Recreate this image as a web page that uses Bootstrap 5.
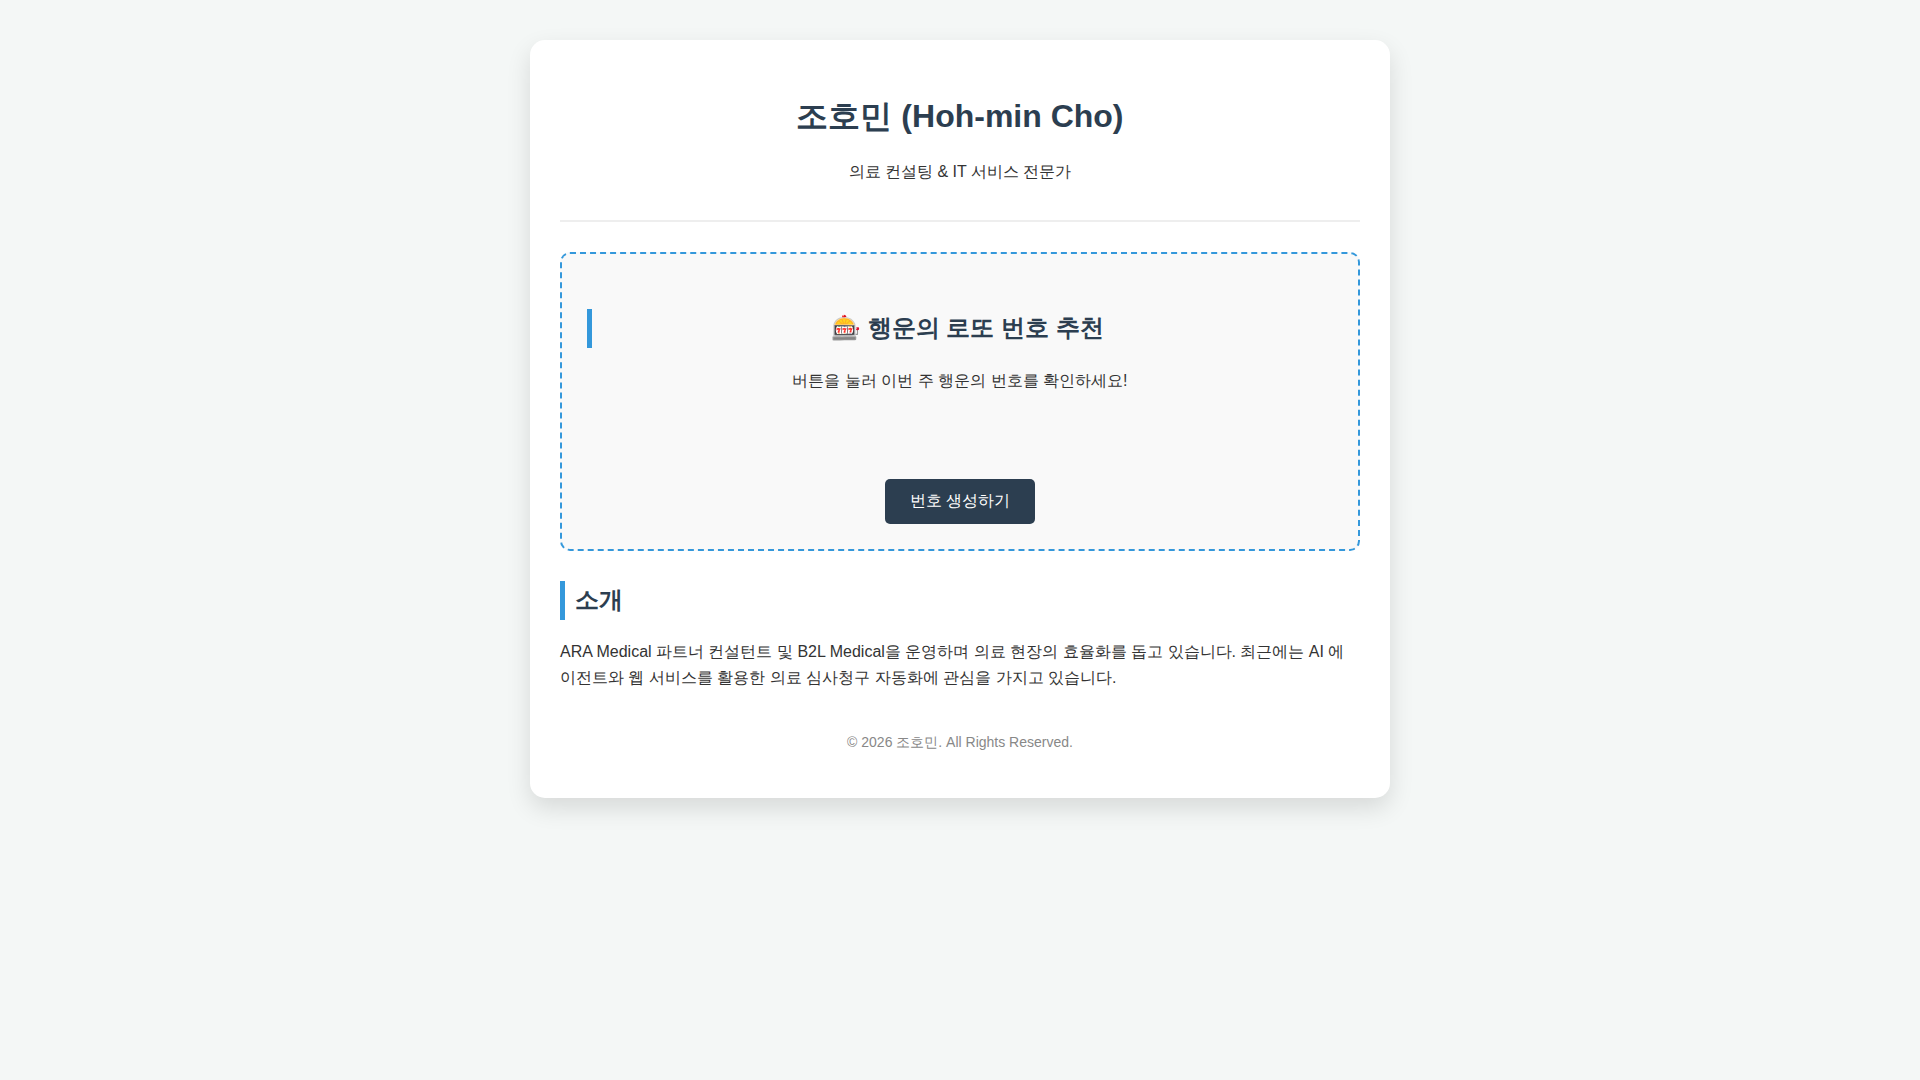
<!DOCTYPE html>
<html lang="ko">
<head>
<meta charset="utf-8">
<meta name="viewport" content="width=device-width, initial-scale=1">
<title>조호민 (Hoh-min Cho)</title>
<link href="https://cdn.jsdelivr.net/npm/bootstrap@5.3.0/dist/css/bootstrap.min.css" rel="stylesheet">
<style>
  body { background: #f4f7f6; color: #333; font-family: "Liberation Sans", sans-serif; font-size: 16px; line-height: 26px; }
  .profile { max-width: 860px; margin: 40px auto; padding: 30px; border-radius: 15px; box-shadow: 0 10px 25px rgba(0, 0, 0, .12); }
  .profile-head { padding: 21px 0 35px; margin-bottom: 30px; border-bottom: 2px solid #eee; }
  h1, h2 { color: #2c3e50; font-weight: 700; }
  h1 { font-size: 32px; line-height: 51px; margin-bottom: 17px; }
  h2 { min-height: 39px; font-size: 24px; line-height: 38px; margin: 30px 0 19px; padding-left: 10px; border-left: 5px solid #3498db; }
  .lotto { padding: 25px; background: #f9f9f9; border: 2px dashed #3498db; border-radius: 10px; }
  .lotto h2 { margin-bottom: 20px; }
  .lotto-numbers { min-height: 45px; margin: 20px 0; }
  .btn-draw { --bs-btn-bg: #2c3e50; --bs-btn-color: #fff; --bs-btn-hover-bg: #3498db; --bs-btn-hover-color: #fff; --bs-btn-active-bg: #3498db; --bs-btn-active-color: #fff; --bs-btn-border-width: 0; --bs-btn-border-radius: 5px; padding: 12px 25px 13px; line-height: 20px; }
  .profile-foot { margin: 39px 0 14px; color: #888; font-size: 14px; line-height: 24px; }
</style>
</head>
<body>
<main class="profile bg-white">
  <header class="profile-head text-center">
    <h1>조호민 (Hoh-min Cho)</h1>
    <p class="mb-0">의료 컨설팅 &amp; IT 서비스 전문가</p>
  </header>
  <section class="lotto text-center">
    <h2>🎰 행운의 로또 번호 추천</h2>
    <p class="mb-0">버튼을 눌러 이번 주 행운의 번호를 확인하세요!</p>
    <div class="lotto-numbers d-flex justify-content-center gap-2" aria-live="polite"></div>
    <button type="button" class="btn btn-draw">번호 생성하기</button>
  </section>
  <section>
    <h2>소개</h2>
    <p class="mb-0">ARA Medical 파트너 컨설턴트 및 B2L Medical을 운영하며 의료 현장의 효율화를 돕고 있습니다. 최근에는 AI 에이전트와 웹 서비스를 활용한 의료 심사청구 자동화에 관심을 가지고 있습니다.</p>
  </section>
  <footer class="profile-foot text-center">© 2026 조호민. All Rights Reserved.</footer>
</main>
<script src="https://cdn.jsdelivr.net/npm/bootstrap@5.3.0/dist/js/bootstrap.bundle.min.js"></script>
</body>
</html>
